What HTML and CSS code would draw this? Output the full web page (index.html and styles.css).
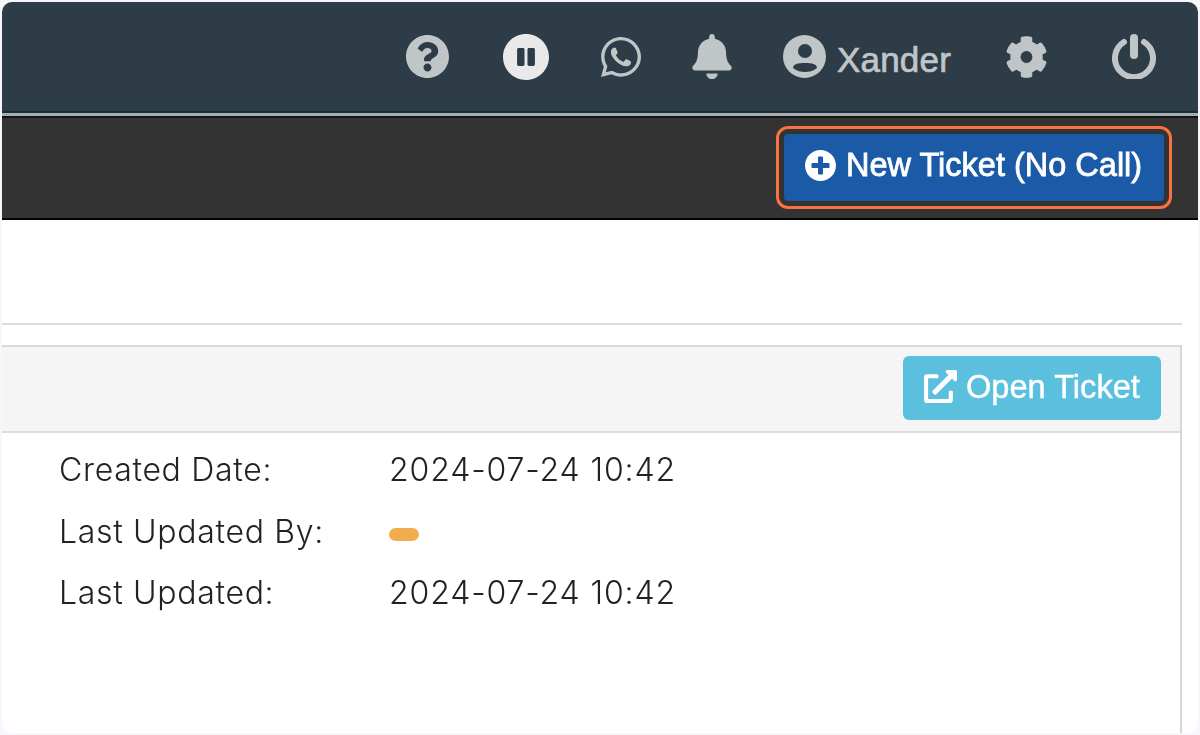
FILE: index.html
```html
<!DOCTYPE html>
<html lang="en">
<head>
<meta charset="utf-8">
<title>Ticket</title>
<link rel="stylesheet" href="styles.css">
</head>
<body>
<div class="window">
  <header class="topbar">
    <svg class="ico ico-help" viewBox="8 8 496 496"><path d="M504 256c0 136.997-111.043 248-248 248S8 392.997 8 256C8 119.083 119.043 8 256 8s248 111.083 248 248zM262.655 90c-54.497 0-89.255 22.957-116.549 63.758-3.536 5.286-2.353 12.415 2.715 16.258l34.699 26.31c5.205 3.947 12.621 3.008 16.665-2.122 17.864-22.658 30.113-35.797 57.303-35.797 20.429 0 45.698 13.148 45.698 32.958 0 14.976-12.363 22.667-32.534 33.976C247.128 238.528 216 254.941 216 296v4c0 6.627 5.373 12 12 12h56c6.627 0 12-5.373 12-12v-1.333c0-28.462 83.186-29.647 83.186-106.667 0-58.002-60.165-102-116.531-102zM256 338c-25.365 0-46 20.635-46 46 0 25.364 20.635 46 46 46s46-20.636 46-46c0-25.365-20.635-46-46-46z"/></svg>
    <svg class="ico ico-pause" viewBox="8 8 496 496"><path d="M256 8C119 8 8 119 8 256s111 248 248 248 248-111 248-248S393 8 256 8zm-16 328c0 8.800-7.200 16-16 16h-48c-8.800 0-16-7.200-16-16V176c0-8.800 7.200-16 16-16h48c8.800 0 16 7.200 16 16v160zm112 0c0 8.800-7.200 16-16 16h-48c-8.800 0-16-7.200-16-16V176c0-8.800 7.200-16 16-16h48c8.800 0 16 7.200 16 16v160z"/></svg>
    <svg class="ico ico-whatsapp" viewBox="0 32 448 448"><path d="M380.900 97.100C339 55.100 283.200 32 223.900 32c-122.400 0-222 99.600-222 222 0 39.100 10.200 77.300 29.600 111L0 480l117.700-30.900c32.400 17.700 68.900 27 106.100 27h.1c122.300 0 224.100-99.600 224.100-222 0-59.300-25.200-115-67.100-157zm-157 341.600c-33.200 0-65.700-8.900-94-25.700l-6.700-4-69.800 18.300L72 359.200l-4.400-7c-18.500-29.400-28.200-63.300-28.200-98.200 0-101.700 82.800-184.500 184.600-184.500 49.300 0 95.600 19.200 130.400 54.100 34.800 34.900 56.200 81.200 56.100 130.500 0 101.800-84.900 184.600-186.600 184.600zm101.200-138.200c-5.500-2.800-32.800-16.200-37.900-18-5.100-1.900-8.800-2.800-12.500 2.800-3.700 5.600-14.300 18-17.600 21.800-3.200 3.700-6.500 4.200-12 1.400-32.600-16.300-54-29.100-75.500-66-5.700-9.800 5.700-9.100 16.300-30.300 1.800-3.700.9-6.900-.5-9.700-1.400-2.800-12.500-30.100-17.100-41.200-4.500-10.800-9.100-9.300-12.500-9.500-3.200-.2-6.900-.2-10.600-.2-3.700 0-9.700 1.400-14.800 6.900-5.100 5.600-19.400 19-19.400 46.300 0 27.300 19.900 53.700 22.600 57.400 2.800 3.700 39.100 59.700 94.800 83.800 35.200 15.200 49 16.500 66.600 13.900 10.700-1.600 32.800-13.400 37.400-26.400 4.600-13 4.600-24.100 3.200-26.400-1.300-2.500-5-3.900-10.500-6.600z"/></svg>
    <svg class="ico ico-bell" viewBox="0 0 448 512"><path d="M224 512c35.320 0 63.970-28.650 63.970-64H160.030c0 35.350 28.650 64 63.970 64zm215.390-149.710c-19.320-20.760-55.470-51.990-55.470-154.290 0-77.700-54.480-139.900-127.940-155.160V32c0-17.670-14.320-32-31.980-32s-31.980 14.330-31.980 32v20.840C118.560 68.100 64.080 130.300 64.080 208c0 102.300-36.150 133.530-55.470 154.290-6 6.450-8.660 14.160-8.610 21.710.11 16.400 12.980 32 32.100 32h383.800c19.120 0 32-15.600 32.100-32 .05-7.550-2.610-15.270-8.610-21.710z"/></svg>
    <svg class="ico ico-user" viewBox="0 0 43 43"><path fill-rule="evenodd" d="M21.500 0a21.500 21.500 0 1 0 0 43a21.500 21.500 0 1 0 0-43ZM22 9a7 7 0 1 0 0 14a7 7 0 1 0 0-14ZM10 33C10 29 15 28 22 28S34 29 34 33C30 36 26 37 22 37S14 36 10 33Z"/></svg>
    <span class="username">Xander</span>
    <svg class="ico ico-cog" viewBox="4 -4 504 520"><path class="cog-shape" fill-rule="evenodd" d="M487.400 315.700l-42.600-24.600c4.300-23.200 4.300-47 0-70.200l42.600-24.600c4.900-2.800 7.100-8.600 5.500-14-11.100-35.600-30-67.800-54.700-94.600-3.800-4.100-10-5.100-14.800-2.300L380.800 110c-17.900-15.400-38.500-27.300-60.800-35.100V25.800c0-5.600-3.900-10.500-9.400-11.700-36.700-8.200-74.300-7.800-109.200 0-5.500 1.200-9.400 6.100-9.400 11.700V75c-22.200 7.900-42.800 19.800-60.800 35.100L88.700 85.500c-4.900-2.800-11-1.900-14.800 2.300-24.700 26.700-43.600 58.900-54.700 94.600-1.700 5.400.6 11.200 5.500 14L67.300 221c-4.300 23.200-4.300 47 0 70.200l-42.600 24.600c-4.900 2.800-7.100 8.600-5.500 14 11.100 35.600 30 67.800 54.700 94.600 3.800 4.100 10 5.100 14.800 2.300l42.600-24.600c17.900 15.400 38.500 27.300 60.800 35.100v49.200c0 5.600 3.900 10.500 9.400 11.700 36.700 8.200 74.300 7.800 109.200 0 5.500-1.200 9.400-6.100 9.400-11.700v-49.200c22.200-7.900 42.800-19.800 60.800-35.100l42.600 24.600c4.900 2.800 11 1.900 14.800-2.300 24.700-26.700 43.600-58.900 54.700-94.600 1.500-5.500-.7-11.300-5.600-14.100zM256 336c-44.100 0-80-35.900-80-80s35.900-80 80-80 80 35.900 80 80-35.900 80-80 80z"/></svg>
    <svg class="ico ico-power" viewBox="0 0 44 45"><path class="power-ring" d="M12 8A19 19 0 1 0 32 8"/><path class="power-bar" d="M22 4V21"/></svg>
  </header>
  <div class="actionbar">
    <button class="btn-new" type="button">
      <svg class="ico-plus" viewBox="8 8 496 496"><path d="M256 8C119 8 8 119 8 256s111 248 248 248 248-111 248-248S393 8 256 8zm144 276c0 6.600-5.400 12-12 12h-92v92c0 6.600-5.400 12-12 12h-56c-6.600 0-12-5.400-12-12v-92h-92c-6.600 0-12-5.400-12-12v-56c0-6.600 5.400-12 12-12h92v-92c0-6.600 5.400-12 12-12h56c6.600 0 12 5.400 12 12v92h92c6.600 0 12 5.400 12 12v56z"/></svg>
      New Ticket (No Call)
    </button>
  </div>
  <main class="content">
    <hr class="rule">
    <section class="panel">
      <div class="panel-head">
        <button class="btn-open" type="button">
          <svg class="ico-open" viewBox="0 0 512 512"><path d="M432 320H400a16 16 0 0 0-16 16V448H64V128H208a16 16 0 0 0 16-16V80a16 16 0 0 0-16-16H48A48 48 0 0 0 0 112V464a48 48 0 0 0 48 48H400a48 48 0 0 0 48-48V336A16 16 0 0 0 432 320ZM488 0h-128c-21.370 0-32.050 25.910-17 41l35.730 35.730L135 320.370a24 24 0 0 0 0 34L157.670 377a24 24 0 0 0 34 0L435.280 133.320 471 169c15 15 41 4.500 41-17V24A24 24 0 0 0 488 0Z"/></svg>
          Open Ticket
        </button>
      </div>
      <dl class="details">
        <dt>Created Date:</dt><dd>2024-07-24 10:42</dd>
        <dt>Last Updated By:</dt><dd><span class="badge"></span></dd>
        <dt>Last Updated:</dt><dd>2024-07-24 10:42</dd>
      </dl>
    </section>
  </main>
</div>
</body>
</html>
```

FILE: styles.css
```css
* { box-sizing: border-box; }
html, body { height: 100%; }
body {
  margin: 0;
  padding: 2px;
  background: #f6f6fc;
  overflow: hidden;
  font-family: "Liberation Sans", Arial, sans-serif;
}
.window {
  height: 731px;
  border-radius: 10px;
  overflow: hidden;
  background: #fff;
  display: flex;
  flex-direction: column;
  filter: blur(0.6px);
}
.topbar {
  height: 114px;
  flex: none;
  background: #2d3c47;
  border-bottom: 3px solid #a9acad;
  box-shadow: inset 0 -2px 0 #12303f;
  display: flex;
  align-items: center;
  padding: 0 42px 2px 0;
  justify-content: flex-end;
  color: #c0c5c8;
}
.ico { fill: currentColor; flex: none; display: block; }
.ico-help { width: 43px; height: 43px; margin-right: 54px; }
.ico-pause { width: 46px; height: 46px; margin-right: 52px; color: #e9e9e9; }
.ico-whatsapp { width: 40px; height: 40px; margin-right: 51px; }
.ico-bell { width: 40px; height: 45px; margin-right: 51px; }
.ico-user { width: 43px; height: 43px; margin-right: 11px; }
.username {
  font-size: 35px;
  margin: 7px 55px 0 0;
  letter-spacing: 0.2px;
  -webkit-text-stroke: 0.7px currentColor;
}
.ico-cog { width: 41px; height: 44px; margin-right: 65px; }
.cog-shape { stroke: currentColor; stroke-width: 14; }
.ico-power { width: 44px; height: 45px; fill: none; stroke: currentColor; }
.power-ring { stroke-width: 6; stroke-linecap: round; }
.power-bar { stroke-width: 8; stroke-linecap: round; }
.actionbar {
  height: 104px;
  flex: none;
  background: #333;
  border-top: 2px solid #141414;
  border-bottom: 2px solid #000;
  display: flex;
  align-items: center;
  justify-content: flex-end;
  padding-right: 34px;
}
.btn-new {
  width: 380px;
  height: 67px;
  margin-top: -2px;
  border: 0;
  border-radius: 4px;
  background: #1b5aa6;
  color: #fff;
  font: 400 32.5px "Liberation Sans", Arial, sans-serif;
  -webkit-text-stroke: 0.8px #fff;
  outline: 3px solid #f97342;
  outline-offset: 5px;
  display: flex;
  align-items: center;
  gap: 10px;
  padding: 0 0 4px 21px;
  white-space: nowrap;
}
.ico-plus { width: 31px; height: 31px; fill: #fff; flex: none; }
.content {
  flex: 1;
  min-height: 0;
  display: flex;
  flex-direction: column;
  padding: 103px 16px 0 0;
}
.rule {
  width: 100%;
  height: 2px;
  margin: 0 0 20px;
  border: 0;
  background: #dcdcdc;
}
.panel {
  flex: 1;
  border: solid #d8d8d8;
  border-width: 2px 2px 0 0;
}
.panel-head {
  height: 86px;
  background: #f5f5f5;
  border-bottom: 2px solid #dcdcdc;
  display: flex;
  justify-content: flex-end;
  padding: 9px 19px 0 0;
}
.btn-open {
  width: 258px;
  height: 64px;
  border: 0;
  border-radius: 6px;
  background: #5bc0de;
  color: #fff;
  font: 400 32.6px "Liberation Sans", Arial, sans-serif;
  -webkit-text-stroke: 0.4px #fff;
  display: flex;
  align-items: center;
  gap: 9px;
  padding: 0 0 3px 21px;
  white-space: nowrap;
}
.ico-open { width: 33px; height: 33px; fill: #fff; flex: none; }
.details {
  margin: 0;
  padding: 6px 0 0 57px;
  display: grid;
  grid-template-columns: 330px 1fr;
  grid-auto-rows: 61.5px;
  align-items: center;
  font-family: Inter, "Liberation Sans", sans-serif;
  font-size: 32px;
  font-weight: 300;
  color: #222;
}
.details dt, .details dd { margin: 0; }
.details dt { letter-spacing: 0.68px; }
.details dd { letter-spacing: 0.87px; }
.badge {
  display: block;
  width: 30px;
  height: 13px;
  margin: 7px 0 0;
  border-radius: 7px;
  background: #f0ad4e;
}
```
